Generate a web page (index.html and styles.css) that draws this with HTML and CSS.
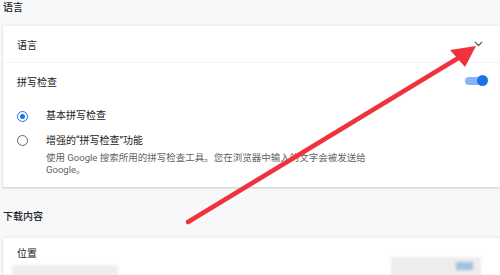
FILE: index.html
```html
<!DOCTYPE html>
<html lang="zh-CN">
<head>
<meta charset="utf-8">
<title>设置</title>
<link rel="stylesheet" href="styles.css">
</head>
<body>
<div class="page">
  <div class="section-title first">语言</div>
  <div class="card">
    <div class="row row-border">
      <span class="label">语言</span>
      <svg class="chevron" width="9" height="6" viewBox="0 0 9 6"><path d="M1 1 L4.5 4.5 L8 1" fill="none" stroke="#5f6368" stroke-width="1.3"/></svg>
    </div>
    <div class="row">
      <span class="label">拼写检查</span>
      <span class="toggle"><span class="track"></span><span class="knob"></span></span>
    </div>
    <div class="options">
      <div class="option">
        <span class="radio checked"></span>
        <span class="opt-text">基本拼写检查</span>
      </div>
      <div class="option second">
        <span class="radio"></span>
        <div class="opt-body">
          <div class="opt-text">增强的“拼写检查”功能</div>
          <div class="desc">使用 Google 搜索所用的拼写检查工具。您在浏览器中输入的文字会被发送给<br>Google。</div>
        </div>
      </div>
    </div>
  </div>
  <div class="section-title second-title">下载内容</div>
  <div class="card card2">
    <div class="row2"><span class="label">位置</span></div>
    <div class="blurred">
      <span class="blur-a"></span>
      <span class="blur-b"></span>
      <span class="blur-btn"></span>
    </div>
  </div>
</div>
<svg class="arrow" width="500" height="275" viewBox="0 0 500 275">
  <line x1="188" y1="222" x2="460" y2="57" stroke="#f0323c" stroke-width="4.5" stroke-linecap="round"/>
  <polygon points="476,46 450,50 465,67" fill="#f0323c"/>
</svg>
</body>
</html>
```

FILE: styles.css
```css
html, body {
  margin: 0;
  padding: 0;
}
body {
  width: 500px;
  height: 275px;
  overflow: hidden;
  background: #f7f8fa;
  font-family: Roboto, "Noto Sans CJK SC", sans-serif;
  font-size: 10px;
  color: #202124;
  position: relative;
}
.page {
  padding-left: 3px;
}
.section-title {
  line-height: 16px;
  height: 16px;
  font-weight: 500;
  color: #202124;
}
.section-title.first {
  margin-bottom: 9px;
}
.section-title.second-title {
  margin-top: 22px;
  margin-bottom: 12px;
}
.card {
  background: #ffffff;
  box-shadow: 0 1px 2px rgba(60, 64, 67, 0.25);
  border-top: 1px solid #eef0f2;
}
.row {
  height: 36px;
  display: flex;
  align-items: center;
  justify-content: space-between;
  padding-left: 14px;
  padding-right: 12px;
}
.row-border {
  border-bottom: 1px solid #f1f3f4;
  padding-right: 17px;
}
.label {
  color: #202124;
}
.chevron {
  display: block;
}
.toggle {
  position: relative;
  width: 23px;
  height: 12px;
  display: block;
}
.track {
  position: absolute;
  left: 0;
  top: 2px;
  width: 22px;
  height: 8px;
  border-radius: 4px;
  background: #8ab4f8;
}
.knob {
  position: absolute;
  right: 0;
  top: 0;
  width: 11px;
  height: 11px;
  border-radius: 50%;
  background: #1a73e8;
}
.options {
  padding: 6px 0 11px 15px;
}
.option {
  display: flex;
  align-items: center;
  height: 22px;
}
.option.second {
  align-items: flex-start;
  height: auto;
  margin-top: 3px;
}
.option.second .radio {
  margin-top: 5px;
}
.radio {
  width: 9px;
  height: 9px;
  border: 1.5px solid #5f6368;
  border-radius: 50%;
  box-sizing: content-box;
  margin-left: -1px;
  margin-right: 18px;
  position: relative;
  flex: none;
}
.radio.checked {
  border-color: #1a73e8;
}
.radio.checked::after {
  content: "";
  position: absolute;
  left: 2px;
  top: 2px;
  width: 5px;
  height: 5px;
  border-radius: 50%;
  background: #1a73e8;
}
.opt-text {
  line-height: 22px;
  color: #202124;
}
.desc {
  line-height: 12px;
  font-size: 9.5px;
  color: #5f6368;
}
.card2 {
  height: 39px;
  overflow: hidden;
}
.row2 {
  padding: 9px 0 0 14px;
  line-height: 14px;
  height: 14px;
}
.blurred {
  position: relative;
  height: 16px;
  filter: blur(1.5px);
}
.blur-a {
  position: absolute;
  left: 9px;
  top: 4px;
  width: 106px;
  height: 16px;
  background: #eeeeef;
}
.blur-b {
  position: absolute;
  left: 388px;
  top: -4px;
  width: 90px;
  height: 20px;
  background: #ededed;
}
.blur-btn {
  position: absolute;
  left: 453px;
  top: 1px;
  width: 17px;
  height: 8px;
  background: #a4c0dc;
}
.arrow {
  position: absolute;
  left: 0;
  top: 0;
  pointer-events: none;
}
```
